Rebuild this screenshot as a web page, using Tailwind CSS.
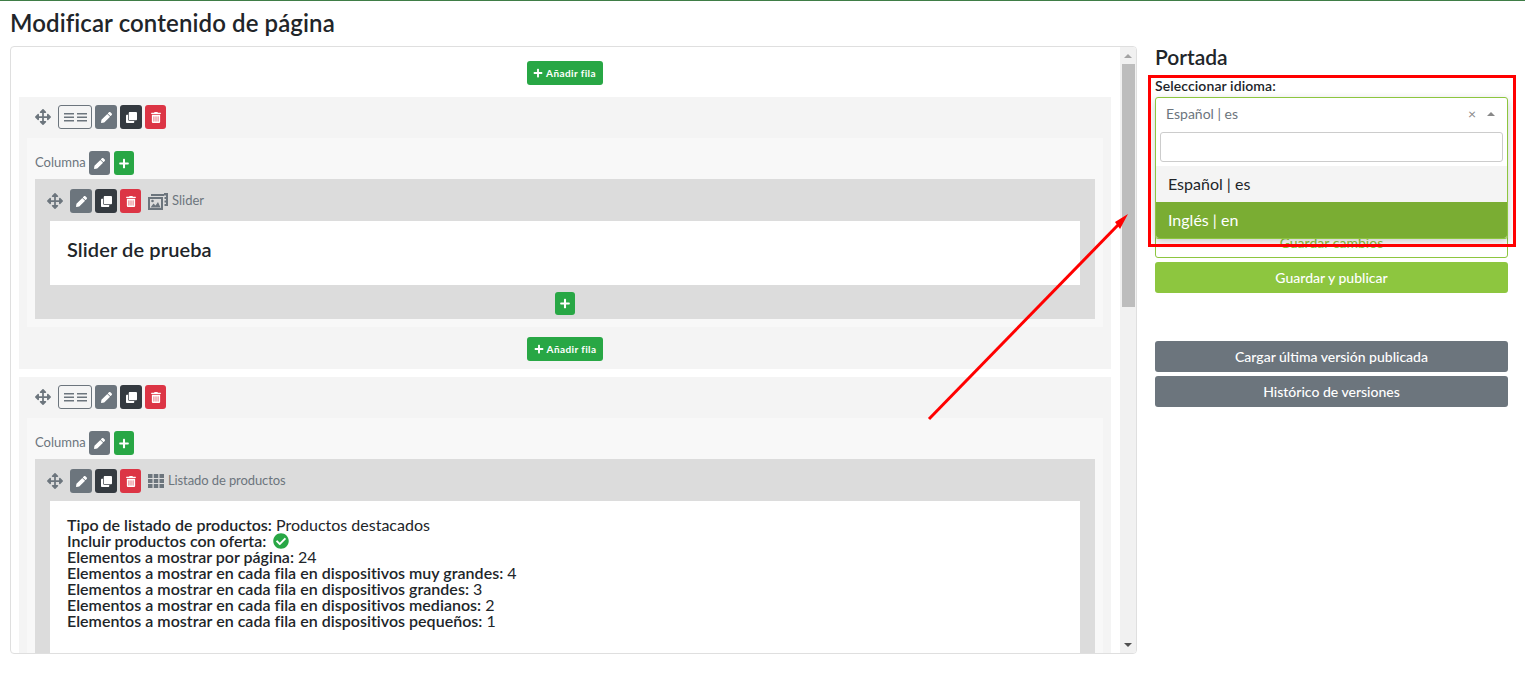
<!DOCTYPE html>
<html lang="es">
<head>
    <meta charset="UTF-8">
    <meta name="viewport" content="width=device-width, initial-scale=1.0">
    <title>Modificar contenido de página</title>
    <script src="https://cdn.jsdelivr.net/npm/@tailwindcss/browser@4"></script>
</head>
<body class="relative h-[678px] overflow-hidden bg-white font-['Lato',sans-serif] text-[#212529] border-t border-[#3f7d46]">
    <!-- icons -->
    <svg class="hidden" xmlns="http://www.w3.org/2000/svg">
        <symbol id="i-move" viewBox="0 0 512 512"><path d="M352.201 425.775l-79.196 79.196c-9.373 9.373-24.568 9.373-33.941 0l-79.196-79.196c-15.119-15.119-4.411-40.971 16.971-40.97h51.162V284H127.196v51.162c0 21.382-25.851 32.09-40.971 16.971L7.029 272.937c-9.373-9.373-9.373-24.569 0-33.941L86.225 159.8c15.119-15.119 40.971-4.411 40.971 16.971V228H228V127.196h-51.23c-21.382 0-32.09-25.851-16.971-40.971l79.196-79.196c9.373-9.373 24.568-9.373 33.941 0l79.196 79.196c15.119 15.119 4.411 40.971-16.971 40.971h-51.162V228h100.804v-51.162c0-21.382 25.851-32.09 40.97-16.971l79.196 79.196c9.373 9.373 9.373 24.569 0 33.941L425.773 352.2c-15.119 15.119-40.971 4.411-40.97-16.971V284H284v100.804h51.23c21.382 0 32.09 25.851 16.971 40.971z"/></symbol>
        <symbol id="i-pencil" viewBox="0 0 512 512"><path d="M497.9 142.1l-46.1 46.1c-4.7 4.7-12.3 4.7-17 0l-111-111c-4.7-4.7-4.7-12.3 0-17l46.1-46.1c18.7-18.7 49.1-18.7 67.9 0l60.1 60.1c18.8 18.7 18.8 49.1 0 67.9zM284.2 99.8L21.6 362.4.4 483.9c-2.9 16.4 11.4 30.6 27.8 27.8l121.5-21.3 262.6-262.6c4.7-4.7 4.7-12.3 0-17l-111-111c-4.8-4.7-12.4-4.7-17.1 0z"/></symbol>
        <symbol id="i-clone" viewBox="0 0 512 512"><path d="M464 0c26.51 0 48 21.49 48 48v288c0 26.51-21.49 48-48 48H176c-26.51 0-48-21.49-48-48V48c0-26.51 21.49-48 48-48h288M176 416c-44.112 0-80-35.888-80-80V128H48c-26.51 0-48 21.49-48 48v288c0 26.51 21.49 48 48 48h288c26.51 0 48-21.49 48-48v-48H176z"/></symbol>
        <symbol id="i-trash" viewBox="0 0 448 512"><path d="M32 464a48 48 0 0 0 48 48h288a48 48 0 0 0 48-48V128H32zm272-256a16 16 0 0 1 32 0v224a16 16 0 0 1-32 0zm-96 0a16 16 0 0 1 32 0v224a16 16 0 0 1-32 0zm-96 0a16 16 0 0 1 32 0v224a16 16 0 0 1-32 0zM432 32H312l-9.4-18.7A24 24 0 0 0 281.1 0H166.8a23.72 23.72 0 0 0-21.4 13.3L136 32H16A16 16 0 0 0 0 48v32a16 16 0 0 0 16 16h416a16 16 0 0 0 16-16V48a16 16 0 0 0-16-16z"/></symbol>
        <symbol id="i-plus" viewBox="0 0 448 512"><path d="M416 208H272V64c0-17.67-14.33-32-32-32h-32c-17.67 0-32 14.33-32 32v144H32c-17.67 0-32 14.33-32 32v32c0 17.67 14.33 32 32 32h144v144c0 17.67 14.33 32 32 32h32c17.67 0 32-14.33 32-32V304h144c17.67 0 32-14.33 32-32v-32c0-17.67-14.33-32-32-32z"/></symbol>
        <symbol id="i-check" viewBox="0 0 512 512"><path d="M504 256c0 136.967-111.033 248-248 248S8 392.967 8 256 119.033 8 256 8s248 111.033 248 248zM227.314 387.314l184-184c6.248-6.248 6.248-16.379 0-22.627l-22.627-22.627c-6.248-6.249-16.379-6.249-22.628 0L216 308.118l-70.059-70.059c-6.248-6.248-16.379-6.248-22.628 0l-22.627 22.627c-6.248 6.248-6.248 16.379 0 22.627l104 104c6.249 6.249 16.379 6.249 22.628.001z"/></symbol>
        <symbol id="i-images" viewBox="0 0 20 17"><path d="M0 4h15v13H0zM2 6v9h11V6z" fill-rule="evenodd"/><path d="M2.500 14.500l3-4 2 2 2.500-3.500 2.500 5.500z"/><circle cx="4.500" cy="8" r="1.300"/><path d="M3 1h13v2H3zM16 0h4v13h-3.500v-2H18V9.500h-1.500v-2H18V6h-1.500V4H18V2.500h-2z"/></symbol>
        <symbol id="i-grid" viewBox="0 0 16 14"><path d="M0 0h4.500v4H0zM5.750 0h4.500v4h-4.500zM11.500 0H16v4h-4.500zM0 5h4.500v4H0zM5.750 5h4.500v4h-4.500zM11.500 5H16v4h-4.500zM0 10h4.500v4H0zM5.750 10h4.500v4h-4.500zM11.500 10H16v4h-4.500z"/></symbol>
        <symbol id="i-lines" viewBox="0 0 23 9"><path d="M0 0h10v1.500H0zM0 3.500h10v1.500H0zM0 7h10v1.500H0zM13 0h10v1.500H13zM13 3.500h10v1.500H13zM13 7h10v1.500H13z"/></symbol>
    </svg>

    <h1 class="pl-2.5 pt-[7px] h-[45px] text-2xl leading-[29px] font-semibold tracking-[0.1px]">Modificar contenido de página</h1>

    <div class="flex items-start pl-2.5">
        <!-- builder panel -->
        <div class="flex w-[1127px] h-[608px] bg-white border border-[#dfdfdf] rounded overflow-hidden">
            <div class="w-[1109px] h-full overflow-hidden">
                <div class="h-[50px] flex justify-center pt-[14px] pr-[2px]">
                    <button class="flex items-center justify-center gap-[3px] w-[76px] h-6 rounded-[3px] bg-[#28a745] text-white text-[10px] font-bold tracking-[0.4px]"><svg class="w-2.5 h-2.5 fill-white"><use href="#i-plus"/></svg>Añadir fila</button>
                </div>

                <!-- row 1 -->
                <section class="ml-2 w-[1092px] h-[272px] bg-[#f4f4f4] pt-2">
                    <div class="flex items-center h-6 pl-4">
                        <svg class="w-4 h-4 mr-[7px] fill-[#6c757d]"><use href="#i-move"/></svg>
                        <button class="flex items-center justify-center w-[34px] h-6 mr-[3px] rounded-[3px] border border-[#6c757d]"><svg class="w-[23px] h-[9px] fill-[#6c757d]"><use href="#i-lines"/></svg></button>
                        <button class="flex items-center justify-center w-[22px] h-6 mr-[3px] rounded-[3px] bg-[#6c757d]"><svg class="w-[11px] h-[11px] fill-white"><use href="#i-pencil"/></svg></button>
                        <button class="flex items-center justify-center w-[22px] h-6 mr-[3px] rounded-[3px] bg-[#343a40]"><svg class="w-[11px] h-[11px] fill-white"><use href="#i-clone"/></svg></button>
                        <button class="flex items-center justify-center w-[21px] h-6 rounded-[3px] bg-[#dc3545]"><svg class="w-[10px] h-[11px] fill-white"><use href="#i-trash"/></svg></button>
                    </div>
                    <div class="ml-2 mt-[9px] w-[1076px] h-[189px] bg-[#f8f8f8]">
                        <div class="flex items-center h-[41px] pl-2 pt-[13px] pb-1">
                            <span class="text-[13px] text-[#6c757d] mr-[3px]">Columna</span>
                            <button class="flex items-center justify-center w-[21px] h-6 mr-1 rounded-[3px] bg-[#6c757d]"><svg class="w-[11px] h-[11px] fill-white"><use href="#i-pencil"/></svg></button>
                            <button class="flex items-center justify-center w-5 h-6 rounded-[3px] bg-[#28a745]"><svg class="w-[10px] h-[11px] fill-white"><use href="#i-plus"/></svg></button>
                        </div>
                        <div class="ml-2 w-[1060px] h-[140px] bg-[#dcdcdc]">
                            <div class="flex items-center h-[42px] pl-3 pt-[10px] pb-2">
                                <svg class="w-4 h-4 mr-[7px] fill-[#6c757d]"><use href="#i-move"/></svg>
                                <button class="flex items-center justify-center w-[22px] h-6 mr-[3px] rounded-[3px] bg-[#6c757d]"><svg class="w-[11px] h-[11px] fill-white"><use href="#i-pencil"/></svg></button>
                                <button class="flex items-center justify-center w-[22px] h-6 mr-[3px] rounded-[3px] bg-[#343a40]"><svg class="w-[11px] h-[11px] fill-white"><use href="#i-clone"/></svg></button>
                                <button class="flex items-center justify-center w-[21px] h-6 mr-[7px] rounded-[3px] bg-[#dc3545]"><svg class="w-[10px] h-[11px] fill-white"><use href="#i-trash"/></svg></button>
                                <svg class="w-5 h-[17px] mr-1 fill-[#6c757d]"><use href="#i-images"/></svg>
                                <span class="text-[13px] text-[#6c757d]">Slider</span>
                            </div>
                            <div class="ml-[15px] w-[1030px] h-16 bg-white pl-[17px] pt-4">
                                <h3 class="text-xl leading-6 font-semibold tracking-[0.1px]">Slider de prueba</h3>
                            </div>
                            <div class="flex justify-center pt-[7px]">
                                <button class="flex items-center justify-center w-5 h-[23px] rounded-[3px] bg-[#28a745]"><svg class="w-[10px] h-[11px] fill-white"><use href="#i-plus"/></svg></button>
                            </div>
                        </div>
                    </div>
                    <div class="flex justify-center pt-[10px]">
                        <button class="flex items-center justify-center gap-[3px] w-[76px] h-6 rounded-[3px] bg-[#28a745] text-white text-[10px] font-bold tracking-[0.4px]"><svg class="w-2.5 h-2.5 fill-white"><use href="#i-plus"/></svg>Añadir fila</button>
                    </div>
                </section>

                <!-- row 2 -->
                <section class="ml-2 mt-2 w-[1092px] h-[400px] bg-[#f4f4f4] pt-2">
                    <div class="flex items-center h-6 pl-4">
                        <svg class="w-4 h-4 mr-[7px] fill-[#6c757d]"><use href="#i-move"/></svg>
                        <button class="flex items-center justify-center w-[34px] h-6 mr-[3px] rounded-[3px] border border-[#6c757d]"><svg class="w-[23px] h-[9px] fill-[#6c757d]"><use href="#i-lines"/></svg></button>
                        <button class="flex items-center justify-center w-[22px] h-6 mr-[3px] rounded-[3px] bg-[#6c757d]"><svg class="w-[11px] h-[11px] fill-white"><use href="#i-pencil"/></svg></button>
                        <button class="flex items-center justify-center w-[22px] h-6 mr-[3px] rounded-[3px] bg-[#343a40]"><svg class="w-[11px] h-[11px] fill-white"><use href="#i-clone"/></svg></button>
                        <button class="flex items-center justify-center w-[21px] h-6 rounded-[3px] bg-[#dc3545]"><svg class="w-[10px] h-[11px] fill-white"><use href="#i-trash"/></svg></button>
                    </div>
                    <div class="ml-2 mt-[9px] w-[1076px] h-[300px] bg-[#f8f8f8]">
                        <div class="flex items-center h-[41px] pl-2 pt-[13px] pb-1">
                            <span class="text-[13px] text-[#6c757d] mr-[3px]">Columna</span>
                            <button class="flex items-center justify-center w-[21px] h-6 mr-1 rounded-[3px] bg-[#6c757d]"><svg class="w-[11px] h-[11px] fill-white"><use href="#i-pencil"/></svg></button>
                            <button class="flex items-center justify-center w-5 h-6 rounded-[3px] bg-[#28a745]"><svg class="w-[10px] h-[11px] fill-white"><use href="#i-plus"/></svg></button>
                        </div>
                        <div class="ml-2 w-[1060px] h-[260px] bg-[#dcdcdc]">
                            <div class="flex items-center h-[42px] pl-3 pt-[10px] pb-2">
                                <svg class="w-4 h-4 mr-[7px] fill-[#6c757d]"><use href="#i-move"/></svg>
                                <button class="flex items-center justify-center w-[22px] h-6 mr-[3px] rounded-[3px] bg-[#6c757d]"><svg class="w-[11px] h-[11px] fill-white"><use href="#i-pencil"/></svg></button>
                                <button class="flex items-center justify-center w-[22px] h-6 mr-[3px] rounded-[3px] bg-[#343a40]"><svg class="w-[11px] h-[11px] fill-white"><use href="#i-clone"/></svg></button>
                                <button class="flex items-center justify-center w-[21px] h-6 mr-[7px] rounded-[3px] bg-[#dc3545]"><svg class="w-[10px] h-[11px] fill-white"><use href="#i-trash"/></svg></button>
                                <svg class="w-4 h-[14px] mr-1 fill-[#6c757d]"><use href="#i-grid"/></svg>
                                <span class="text-[13px] text-[#6c757d] tracking-[-0.1px]">Listado de productos</span>
                            </div>
                            <div class="ml-[15px] w-[1030px] h-[218px] bg-white pl-[17px] pt-4 text-base leading-4">
                                <div><b class="font-semibold">Tipo de listado de productos:</b> Productos destacados</div>
                                <div class="flex items-center gap-[7px]"><b class="font-semibold">Incluir productos con oferta:</b><svg class="w-4 h-4 fill-[#28a745]"><use href="#i-check"/></svg></div>
                                <div><b class="font-semibold">Elementos a mostrar por página:</b> 24</div>
                                <div><b class="font-semibold tracking-[0.02px]">Elementos a mostrar en cada fila en dispositivos muy grandes:</b> 4</div>
                                <div><b class="font-semibold tracking-[0.02px]">Elementos a mostrar en cada fila en dispositivos grandes:</b> 3</div>
                                <div><b class="font-semibold tracking-[0.02px]">Elementos a mostrar en cada fila en dispositivos medianos:</b> 2</div>
                                <div><b class="font-semibold tracking-[0.02px]">Elementos a mostrar en cada fila en dispositivos pequeños:</b> 1</div>
                            </div>
                        </div>
                    </div>
                </section>
            </div>

            <!-- scrollbar -->
            <div class="w-4 h-full bg-[#f1f1f1] flex flex-col items-center">
                <div class="h-[17px] flex items-center"><span class="border-x-[4px] border-x-transparent border-b-[4px] border-b-[#a3a3a3]"></span></div>
                <div class="w-[13px] h-[243px] bg-[#bdbdbd]"></div>
                <div class="mt-auto h-[17px] flex items-center"><span class="border-x-[4px] border-x-transparent border-t-[4px] border-t-[#505050]"></span></div>
            </div>
        </div>

        <!-- side column -->
        <aside class="relative ml-[18px] w-[353px]">
            <h2 class="text-[21px] leading-6 font-semibold mt-[-1px]">Portada</h2>
            <label class="block mt-[6px] h-[21px] text-sm leading-[21px] font-semibold tracking-[0.1px]">Seleccionar idioma:</label>
            <div class="h-[33px]"></div>
            <div class="h-[99px]"></div>
            <button class="block w-full h-[30px] rounded-[3px] border border-[#8dc63f] text-sm text-[#8dc63f] font-medium">Guardar cambios</button>
            <button class="block w-full h-[31px] mt-1 rounded-[3px] bg-[#8dc63f] text-sm text-white font-medium">Guardar y publicar</button>
            <button class="block w-full h-[31px] mt-[48px] rounded-[3px] bg-[#6c757d] text-sm text-white font-medium">Cargar última versión publicada</button>
            <button class="block w-full h-[31px] mt-1 rounded-[3px] bg-[#6c757d] text-sm text-white font-medium">Histórico de versiones</button>

            <!-- open select -->
            <div class="absolute left-0 top-[51px] w-[353px] rounded-[3px] border border-[#8dc63f] bg-white shadow-[0_3px_8px_rgba(0,0,0,0.2)]">
                <div class="flex items-center h-[32px] pl-[10px] pr-[12px] text-sm text-[#6c757d]">
                    <span class="flex-1">Español | es</span>
                    <span class="mr-[11px] text-sm leading-none text-[#888]">×</span>
                    <span class="border-x-[4px] border-x-transparent border-b-[4px] border-b-[#888]"></span>
                </div>
                <div class="px-1 pt-[2px] h-[36px]"><input class="block w-full h-[30px] rounded-[3px] border border-[#ccc] bg-white"></div>
                <div class="flex items-center h-[36px] pl-3 text-base bg-[#f4f4f4]">Español | es</div>
                <div class="flex items-center h-[36px] pl-3 text-base text-white bg-[#7aad33] rounded-b-[3px]">Inglés | en</div>
            </div>
        </aside>
    </div>

    <!-- annotations -->
    <div class="absolute left-[1148px] top-[74px] w-[368px] h-[172px] border-[3px] border-[#ff0000]"></div>
    <svg class="absolute left-0 top-0 pointer-events-none" width="1525" height="678" xmlns="http://www.w3.org/2000/svg">
        <line x1="929" y1="418" x2="1118" y2="224" stroke="#f00" stroke-width="3"/>
        <path d="M1128 213 L1120 228 L1115 221 Z" fill="#f00"/>
    </svg>
</body>
</html>
